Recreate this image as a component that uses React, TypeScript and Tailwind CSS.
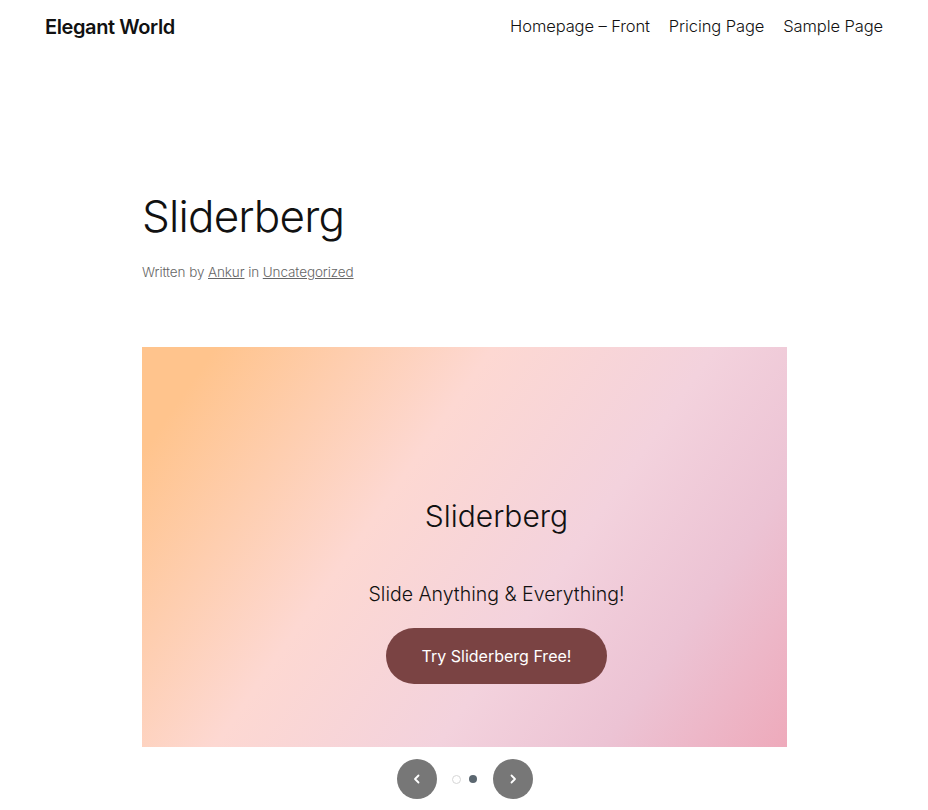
export default function App() {
  return (
    <div className="min-h-[810px] bg-white text-[#111] font-['Inter',sans-serif]">
      <header className="flex items-center justify-between px-[45px] h-[53px]">
        <a className="text-[20px] font-semibold tracking-[-0.4px]">Elegant World</a>
        <nav className="flex gap-[19px] text-[16.5px] font-light tracking-[-0.1px] text-[#111]">
          <a>Homepage – Front</a>
          <a>Pricing Page</a>
          <a>Sample Page</a>
        </nav>
      </header>

      <main className="pl-[142px] pr-[141px] pt-[141px]">
        <h1 className="text-[44px] font-light leading-none tracking-[-0.8px]">Sliderberg</h1>
        <p className="mt-[24px] text-[13.5px] font-light tracking-[-0.1px] text-[#666]">
          Written by <a className="underline">Ankur</a> in{" "}
          <a className="underline">Uncategorized</a>
        </p>

        <section className="mt-[65px]">
          <div className="h-[400px] w-[645px] flex flex-col items-center pl-16 pt-[150px] bg-[linear-gradient(125deg,#ffc48d_8%,#fdd8d2_38%,#f3d2dd_62%,#ecc3d4_80%,#eeaabb_100%)]">
            <h2 className="text-[30px] font-light leading-[38px]">Sliderberg</h2>
            <p className="mt-[45px] text-[19.5px] font-light leading-[28px]">Slide Anything &amp; Everything!</p>
            <button className="mt-[20px] h-[56px] w-[221px] rounded-full bg-[#7a4343] text-[16px] text-white">
              Try Sliderberg Free!
            </button>
          </div>

          <div className="w-[645px] flex items-center justify-center mt-[12px]">
            <button className="w-10 h-10 rounded-full bg-[#777] flex items-center justify-center">
              <svg width="10" height="10" viewBox="0 0 10 10" fill="none" stroke="white" strokeWidth="1.8" strokeLinecap="round" strokeLinejoin="round">
                <path d="M6.5 1.5 3 5l3.5 3.5" />
              </svg>
            </button>
            <div className="flex gap-[8px] ml-[15px] mr-[16px]">
              <span className="w-[9px] h-[9px] rounded-full border border-[#d6d6d6]" />
              <span className="w-[8px] h-[8px] rounded-full bg-[#5b6770]" />
            </div>
            <button className="w-10 h-10 rounded-full bg-[#777] flex items-center justify-center">
              <svg width="10" height="10" viewBox="0 0 10 10" fill="none" stroke="white" strokeWidth="1.8" strokeLinecap="round" strokeLinejoin="round">
                <path d="M3.5 1.5 7 5 3.5 8.5" />
              </svg>
            </button>
          </div>
        </section>
      </main>
    </div>
  );
}
